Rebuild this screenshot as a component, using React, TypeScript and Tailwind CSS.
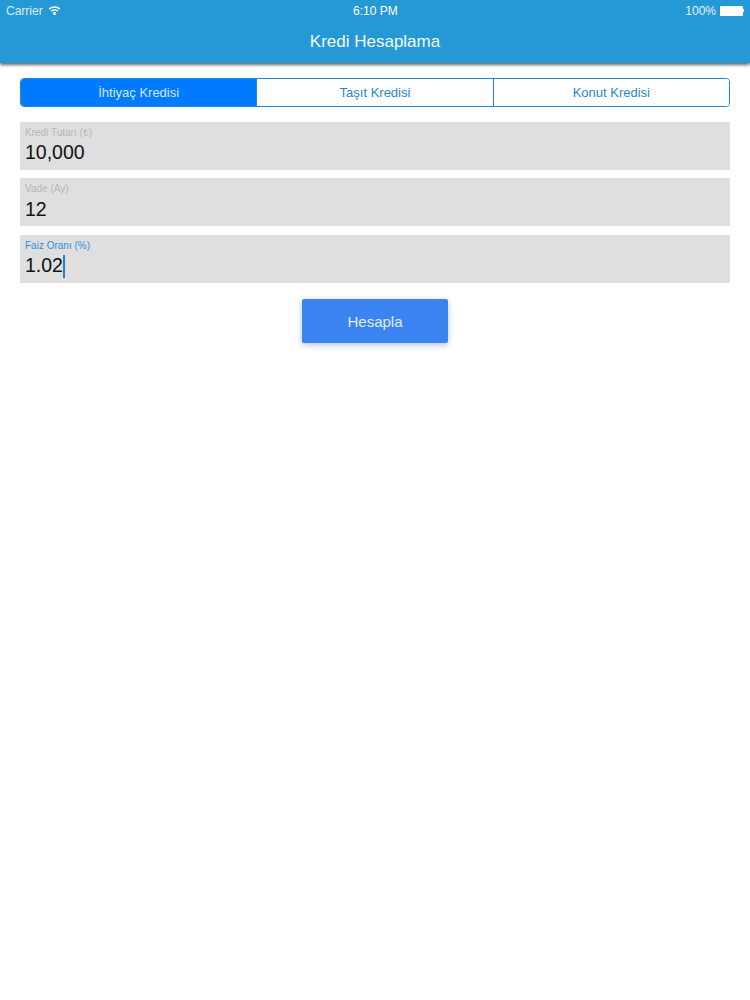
import React from "react";

const tabs = ["İhtiyaç Kredisi", "Taşıt Kredisi", "Konut Kredisi"];

const fields = [
  { label: "Kredi Tutarı (₺)", value: "10,000", active: false },
  { label: "Vade (Ay)", value: "12", active: false },
  { label: "Faiz Oranı (%)", value: "1.02", active: true },
];

const App = () => {
  return (
    <div className="w-[750px] h-[1000px] bg-white overflow-hidden font-['Liberation_Sans',sans-serif]">
      <div className="h-[63px] bg-[#2598d6] shadow-[0_2px_3px_rgba(0,0,0,0.6)] text-white">
        <div className="h-[21px] px-[6px] flex items-center justify-between text-[12px] relative">
          <div className="flex items-center gap-[5px]">
            <span className="text-[#dcecf6]">Carrier</span>
            <svg width="13" height="9" viewBox="0 0 14 10" fill="none" stroke="white" strokeWidth="1.7">
              <path d="M1 3.4C4.4 0.3 9.6 0.3 13 3.4" />
              <path d="M3.4 5.7C5.5 3.9 8.5 3.9 10.6 5.7" />
              <path d="M5.6 7.8C6.4 7.2 7.6 7.2 8.4 7.8" />
              <circle cx="7" cy="9.2" r="0.5" fill="white" />
            </svg>
          </div>
          <span className="absolute left-[353px]">6:10 PM</span>
          <div className="flex items-center gap-[4px]">
            <span className="text-[#e6f2f9]">100%</span>
            <div className="flex items-center">
              <div className="w-[23px] h-[10px] bg-white rounded-[1px]" />
              <div className="w-[1px] h-[3px] bg-white" />
            </div>
          </div>
        </div>
        <div className="h-[42px] pb-[1px] flex items-center justify-center text-[17px] font-medium text-[#f4fafd]">
          Kredi Hesaplama
        </div>
      </div>

      <div className="px-[20px] pt-[15px]">
        <div className="h-[29px] flex border border-[#1f87d0] rounded-[4px] overflow-hidden">
          {tabs.map((tab, index) => (
            <div
              key={tab}
              className={
                index === 0
                  ? "flex-1 flex items-center justify-center text-[13px] bg-[#007aff] text-[#d5e8fb]"
                  : "flex-1 flex items-center justify-center text-[13px] bg-white text-[#2a86c8] border-l border-[#2a86c8]"
              }
            >
              {tab}
            </div>
          ))}
        </div>

        <div className="mt-[14.5px] flex flex-col gap-[8.5px]">
          {fields.map((field) => (
            <div key={field.label} className="h-[48px] bg-[#e0dfe0] px-[5px] pt-[5px]">
              <div className={field.active ? "text-[10px] leading-[11px] text-[#2f90d8]" : "text-[10px] leading-[11px] text-[#b5b5b5]"}>
                {field.label}
              </div>
              <div className="flex items-center h-[31px] text-[19.5px] text-[#111111]">
                {field.value}
                {field.active && <div className="w-[2px] h-[23px] bg-[#2a7fc4]" />}
              </div>
            </div>
          ))}
        </div>

        <div className="flex justify-center mt-[16.5px]">
          <button className="w-[146px] h-[44px] bg-[#3b83f1] rounded-[2px] text-[15px] pt-[2px] text-[#e2edfc] shadow-[0_2px_6px_rgba(40,90,180,0.35)]">
            Hesapla
          </button>
        </div>
      </div>
    </div>
  );
};

export default App;
